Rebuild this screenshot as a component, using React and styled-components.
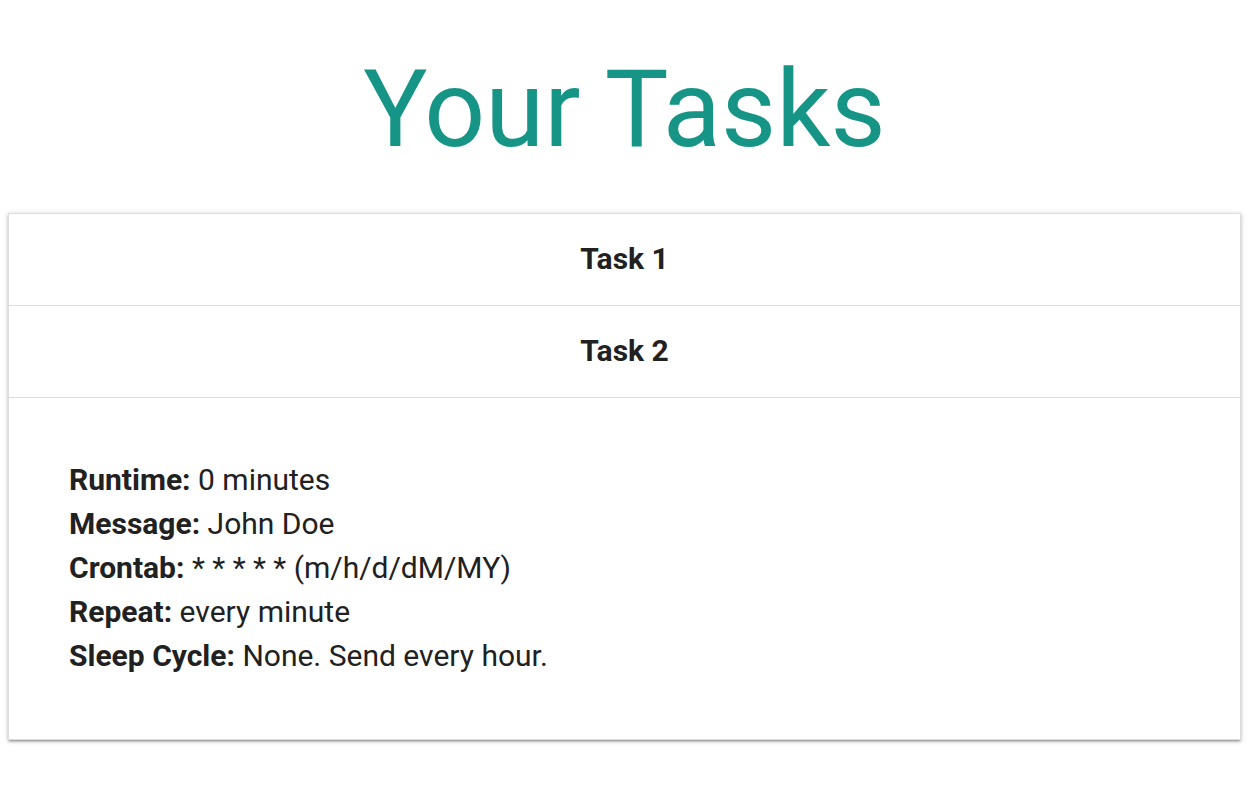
import React from "react";
import styled, { createGlobalStyle } from "styled-components";

const GlobalStyle = createGlobalStyle`
  body {
    margin: 0;
    background: #fff;
    font-family: Roboto, "Liberation Sans", sans-serif;
    color: rgba(0, 0, 0, 0.87);
  }
`;

const Page = styled.div`
  padding: 0 17px 40px 8px;
`;

const Title = styled.h1`
  margin: 0;
  padding-top: 56px;
  height: 213px;
  box-sizing: border-box;
  text-align: center;
  font-size: 107px;
  font-weight: 400;
  line-height: 1;
  color: #169587;
`;

const Collapsible = styled.ul`
  list-style: none;
  margin: 0;
  padding: 0;
  border: 1px solid #ddd;
  border-bottom: none;
  box-shadow: 0 2px 2px 0 rgba(0, 0, 0, 0.16), 0 3px 1px -2px rgba(0, 0, 0, 0.14),
    0 1px 5px 0 rgba(0, 0, 0, 0.2);
`;

const Header = styled.div`
  height: 88px;
  padding-bottom: 3px;
  display: flex;
  align-items: center;
  justify-content: center;
  border-bottom: 1px solid #ddd;
  font-size: 30px;
  font-weight: 700;
  color: #212121;
`;

const Body = styled.div`
  padding: 60px 60px 61px;
  border-bottom: 1px solid #ddd;
  font-size: 30px;
  line-height: 44px;
  color: #212121;
`;

const Line = styled.div`
  b {
    font-weight: 700;
  }
`;

const tasks = [
  { name: "Task 1" },
  {
    name: "Task 2",
    open: true,
    details: [
      ["Runtime:", "0 minutes"],
      ["Message:", "John Doe"],
      ["Crontab:", "* * * * * (m/h/d/dM/MY)"],
      ["Repeat:", "every minute"],
      ["Sleep Cycle:", "None. Send every hour."],
    ],
  },
];

export default function App() {
  return (
    <>
      <GlobalStyle />
      <Page>
        <Title>Your Tasks</Title>
        <Collapsible>
          {tasks.map((task) => (
            <li key={task.name}>
              <Header>{task.name}</Header>
              {task.open && (
                <Body>
                  {task.details.map(([label, value]) => (
                    <Line key={label}>
                      <b>{label}</b> {value}
                    </Line>
                  ))}
                </Body>
              )}
            </li>
          ))}
        </Collapsible>
      </Page>
    </>
  );
}
